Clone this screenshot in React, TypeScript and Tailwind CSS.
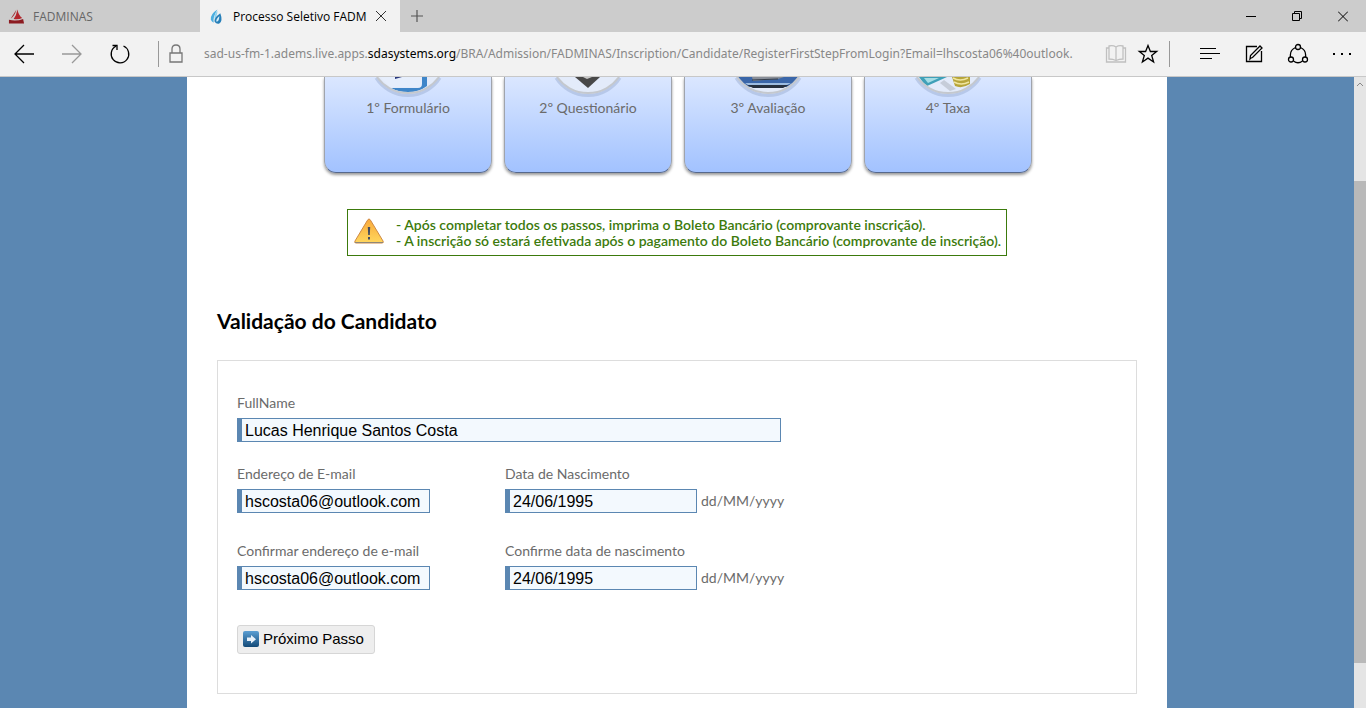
import { useState, type ReactNode } from "react";

const uiFont = "font-['Open_Sans','Noto_Sans',sans-serif]";
const pageFont = "font-['Lato','Noto_Sans',sans-serif]";

const windowButtons = [
  { label: "Minimizar", icon: <path d="M0 5.5h10" /> },
  { label: "Restaurar", icon: <path d="M.5 2.5h7v7h-7zM2.5 2.5v-2h7v7h-2" /> },
  { label: "Fechar", icon: <path d="M0 .5l10 10M10 .5l-10 10" /> },
];

const steps = [
  {
    label: "1º Formulário",
    icon: (
      <>
        <path d="M14 0h42v6q0 4-4 4H24z" fill="#e6eefc" />
        <path d="M56 0h5v9q-8 6-19 6-10 0-17-4h27q4 0 4-4z" fill="#3f86c9" />
        <path d="M29 0h7l-7 2z" fill="#27357c" />
      </>
    ),
  },
  {
    label: "2º Questionário",
    icon: (
      <>
        <path d="M29 0h25L42 11z" fill="#484848" />
        <path d="M37 0h9l-5 2z" fill="#c8c8c8" />
      </>
    ),
  },
  {
    label: "3º Avaliação",
    icon: (
      <>
        <path d="M12 0h60q-4 6-11 10H22Q15 6 12 0z" fill="#3a66a9" />
        <path d="M26 0h32l-6 2-25 2z" fill="#888e98" />
        <path d="M26 3l26-1" stroke="#333c4a" fill="none" />
        <path d="M19 6h46l-4 2H22z" fill="#9dbce0" />
        <path d="M21 8h42l-6 3H27z" fill="#26303e" />
      </>
    ),
  },
  {
    label: "4º Taxa",
    icon: (
      <>
        <path d="M13 0h28L21 9q-5-4-8-9z" fill="#3fa0b8" />
        <path d="M18 1h15l-11 5z" fill="#a5dde5" />
        <path d="M38 3l12 9-6 2-10-8z" fill="#555" opacity=".2" />
        <path d="M46 0h18v7q-8 5-15 2z" fill="#b7a53a" />
        <path d="M47 1q7 4 15 0M48 5q7 4 15 0" stroke="#f0e6a0" strokeWidth="1.5" fill="none" />
      </>
    ),
  },
];

function ToolButton({ label, className = "w-11", children }: { label: string; className?: string; children: ReactNode }) {
  return (
    <button type="button" aria-label={label} className={`flex h-full shrink-0 items-center justify-center ${className}`}>
      <svg width="22" height="22" viewBox="0 0 22 22" fill="none" stroke="currentColor" strokeWidth="1.3">
        {children}
      </svg>
    </button>
  );
}

function TitleBar() {
  return (
    <div className="flex h-8 shrink-0 bg-[#cccccc] text-xs">
      <button type="button" className="flex w-[200px] items-center gap-2 px-2 pt-0.5 text-[#666666]">
        <svg width="17" height="16" viewBox="0 0 18 16">
          <path d="M9 0L3 9.500Q7 7 9 0z" fill="#a3262c" />
          <path d="M10 0q-1 6-4 10 5 1 9-1-4-3-5-9z" fill="#b4262d" />
          <path d="M1 11q8 2 15-1l1 5H1z" fill="#8c1b21" />
        </svg>
        FADMINAS
      </button>
      <div className="flex w-[200px] items-center bg-[#f2f2f2] px-2 pt-0.5 text-black">
        <svg className="shrink-0" width="17" height="16" viewBox="0 0 18 16">
          <path d="M10 0Q2 5 3 11q1 2 3 3-1-6 4-14z" fill="#4cafe0" />
          <path d="M10 1q-4 5-3 9 3-3 3-9z" fill="#8fd2ef" />
          <path d="M13 4Q6 9 7 13q2 3 5 2 4-3 1-11z" fill="#267fb9" />
          <path d="M12 7q-4 4-3 6 3 0 3-6z" fill="#d9eef8" />
        </svg>
        <span className="ml-2 w-[134px] shrink-0 overflow-hidden whitespace-nowrap">Processo Seletivo FADM</span>
        <button type="button" aria-label="Fechar guia" className="ml-2 pb-0.5">
          <svg width="12" height="12" viewBox="0 0 12 12" stroke="#333">
            <path d="M1 1l10 10M11 1L1 11" />
          </svg>
        </button>
      </div>
      <button type="button" aria-label="Nova guia" className="flex w-[34px] items-center justify-center">
        <svg width="12" height="12" viewBox="0 0 12 12" stroke="#555" strokeWidth="1.200">
          <path d="M6 0v12M0 6h12" />
        </svg>
      </button>
      <div className="ml-auto flex">
        {windowButtons.map((b) => (
          <button key={b.label} type="button" aria-label={b.label} className="flex w-[46px] items-center justify-center">
            <svg width="10" height="11" viewBox="0 0 10 11" fill="none" stroke="#000">
              {b.icon}
            </svg>
          </button>
        ))}
      </div>
    </div>
  );
}

function AddressBar() {
  return (
    <div className="flex h-[45px] shrink-0 items-center border-b border-[#c8c8c8] bg-[#f2f2f2] text-black">
      <ToolButton label="Voltar" className="w-12">
        <path d="M21 11H2M11 2l-9 9 9 9" />
      </ToolButton>
      <ToolButton label="Avançar" className="w-12 text-[#999999]">
        <path d="M1 11h19M11 2l9 9-9 9" />
      </ToolButton>
      <ToolButton label="Atualizar" className="w-12">
        <path d="M14.500 3A8.800 8.800 0 1 1 7 3.200" />
        <path d="M3.500 2.500h4.500v4.500" />
      </ToolButton>
      <div className="ml-3.5 h-[26px] w-px bg-[#999999]" />
      <svg className="mx-2.5 shrink-0" width="14" height="20" viewBox="0 0 14 20" fill="none" stroke="#777" strokeWidth="1.300">
        <path d="M1 9h12v9H1zM3 9V5q0-4 4-4t4 4v4" />
      </svg>
      <div className="ml-[11px] min-w-0 flex-1 overflow-hidden font-['Noto_Sans',sans-serif] text-xs whitespace-nowrap text-[#888888]">
        sad-us-fm-1.adems.live.apps.<span className="text-black">sdasystems.org</span>
        /BRA/Admission/FADMINAS/Inscription/Candidate/RegisterFirstStepFromLogin?Email=lhscosta06%40outlook.
      </div>
      <ToolButton label="Modo de leitura" className="ml-3 w-8 text-[#c0c0c0]">
        <path d="M11 4v14M11 4Q8 2 4 3v13q4 0 7 1.500Q14 16 18 16V3q-4-1-7 1z" />
        <path d="M4 5H1.500v14h19V5H18" />
      </ToolButton>
      <ToolButton label="Favoritos" className="w-8">
        <path d="M11 2.500l2.400 6h6.300l-5 4 1.900 6.500-5.600-3.900L5.400 19l1.900-6.500-5-4h6.300z" />
      </ToolButton>
      <div className="mr-[18px] ml-[5px] h-[26px] w-px bg-[#999999]" />
      <ToolButton label="Hub">
        <path d="M1 5.500h16M1 10.500h20M1 15.500h12" strokeWidth="1" />
      </ToolButton>
      <ToolButton label="Anotação na Web">
        <path d="M14 3.500H3.500v15h15V8" />
        <path d="M8 15l-1 1 .500-3.500L17 3l2 2-9.500 9.500z" />
      </ToolButton>
      <ToolButton label="Compartilhar">
        <circle cx="11" cy="4" r="2.500" />
        <circle cx="4" cy="16.500" r="2.500" />
        <circle cx="18" cy="16.500" r="2.500" />
        <path d="M8.500 4.500Q2.500 7 3.500 14M13.500 4.500q6 2.500 5 9.500M6.500 18q4.500 3.500 9 0" />
      </ToolButton>
      <ToolButton label="Mais" className="mr-0.5 w-11">
        <path d="M2 11h2M10 11h2M18 11h2" strokeWidth="2" />
      </ToolButton>
    </div>
  );
}

function StepCard({ label, icon }: { label: string; icon: ReactNode }) {
  return (
    <div className="flex h-24 w-[168px] flex-col items-center rounded-b-xl border-x border-b border-[#a0a4ac] border-b-[#56688c] bg-linear-to-b from-[#dbe7ff] to-[#a2c2ff] shadow-[0_2px_3px_rgba(0,0,0,0.4)]">
      <svg width="84" height="21" viewBox="0 0 84 21">
        <path d="M11 0A38 38 0 0 0 73 0z" fill="#e3ebfa" />
        {icon}
        <path d="M10 1A38 38 0 0 0 74 1" fill="none" stroke="#8fa3c8" strokeWidth="3" opacity=".4" />
        <path d="M11 0A38 38 0 0 0 73 0" fill="none" stroke="#c4c8ce" strokeWidth="2" />
      </svg>
      <span className="leading-5">{label}</span>
    </div>
  );
}

type FieldProps = {
  id: string;
  label: string;
  initial: string;
  width?: string;
  hint?: string;
};

function Field({ id, label, initial, width = "w-48", hint }: FieldProps) {
  const [value, setValue] = useState(initial);
  return (
    <div>
      <label htmlFor={id} className="block leading-4">
        {label}
      </label>
      <div className="mt-[7px] flex items-center gap-1">
        <input
          id={id}
          type="text"
          value={value}
          onChange={(e) => setValue(e.target.value)}
          className={`h-6 border border-l-[5px] border-[#5b87b2] bg-[#f3f9fe] px-[3px] pt-px font-['Liberation_Sans',Arial,sans-serif] text-base text-black outline-none ${width}`}
        />
        {hint && <span className="leading-4">{hint}</span>}
      </div>
    </div>
  );
}

export default function App() {
  return (
    <div className={`flex h-screen flex-col overflow-hidden ${uiFont}`}>
      <TitleBar />
      <AddressBar />
      <div className="flex min-h-0 flex-1">
        <div className="flex flex-1 justify-center overflow-hidden bg-[#5b87b2]">
          <main className={`w-full max-w-[980px] bg-white px-[30px] text-sm text-[#6b6b6b] ${pageFont}`}>
            <div className="flex justify-center gap-3 pl-0.5">
              {steps.map((s) => (
                <StepCard key={s.label} label={s.label} icon={s.icon} />
              ))}
            </div>

            <div className="mx-auto mt-9 flex h-[47px] max-w-[660px] items-center border border-[#3c7a0c] pl-1.5 font-semibold text-[#3c7a0c]">
              <svg className="mr-3 mb-1 shrink-0" width="30" height="26" viewBox="0 0 30 26">
                <defs>
                  <linearGradient id="warn" x1="0" y1="0" x2="0" y2="1">
                    <stop offset="0" stopColor="#f9a93a" />
                    <stop offset="1" stopColor="#ffd75e" />
                  </linearGradient>
                </defs>
                <path d="M15 1q1 0 2 2l12 20q1 2-1 2H2q-2 0-1-2L13 3q1-2 2-2z" fill="url(#warn)" stroke="#cf8a45" />
                <path d="M1 24.500h28" stroke="#8f8778" />
                <path d="M13.800 9h2.400l-.4 8h-1.600zM14 19h2v2.500h-2z" fill="#434c61" />
              </svg>
              <p className="leading-4 whitespace-nowrap">
                - Após completar todos os passos, imprima o Boleto Bancário (comprovante inscrição).
                <br />- A inscrição só estará efetivada após o pagamento do Boleto Bancário (comprovante de inscrição).
              </p>
            </div>

            <h1 className="mt-[53px] text-[21px] leading-6 font-bold text-black">Validação do Candidato</h1>

            <form className="mt-[27px] border border-[#dddddd] px-[19px] pt-[34px] pb-[39px]" onSubmit={(e) => e.preventDefault()}>
              <Field id="fullName" label="FullName" initial="Lucas Henrique Santos Costa" width="w-[544px]" />
              <div className="mt-6 grid grid-cols-[268px_1fr] gap-y-[30px]">
                <Field id="email" label="Endereço de E-mail" initial="hscosta06@outlook.com" width="w-[193px]" />
                <Field id="birth" label="Data de Nascimento" initial="24/06/1995" hint="dd/MM/yyyy" />
                <Field id="emailConfirm" label="Confirmar endereço de e-mail" initial="hscosta06@outlook.com" width="w-[193px]" />
                <Field id="birthConfirm" label="Confirme data de nascimento" initial="24/06/1995" hint="dd/MM/yyyy" />
              </div>
              <button
                type="submit"
                className="mt-[35px] flex h-[29px] items-center gap-1 rounded-[3px] border border-[#d6d6d6] bg-[#eeeeee] pr-2.5 pb-px pl-[5px] font-['Liberation_Sans',Arial,sans-serif] text-[15px] text-black"
              >
                <svg width="16" height="16" viewBox="0 0 16 16">
                  <defs>
                    <linearGradient id="next" x1="0" y1="0" x2="0" y2="1">
                      <stop offset="0" stopColor="#5b9fd4" />
                      <stop offset="1" stopColor="#134a78" />
                    </linearGradient>
                  </defs>
                  <rect width="16" height="16" rx="2" fill="url(#next)" />
                  <path d="M4 6.500h4V4l5 4.200-5 4.300V10H4z" fill="#e8f1fa" />
                </svg>
                Próximo Passo
              </button>
            </form>
          </main>
        </div>
        <div className="flex w-3 shrink-0 flex-col bg-[#e5e5e5]">
          <svg className="mx-auto mt-1" width="8" height="6" viewBox="0 0 8 6" fill="none" stroke="#888">
            <path d="M1 5l3-3 3 3" />
          </svg>
          <div className="mt-[94px] mb-[45px] flex-1 bg-[#b9b9b9]" />
        </div>
      </div>
    </div>
  );
}
